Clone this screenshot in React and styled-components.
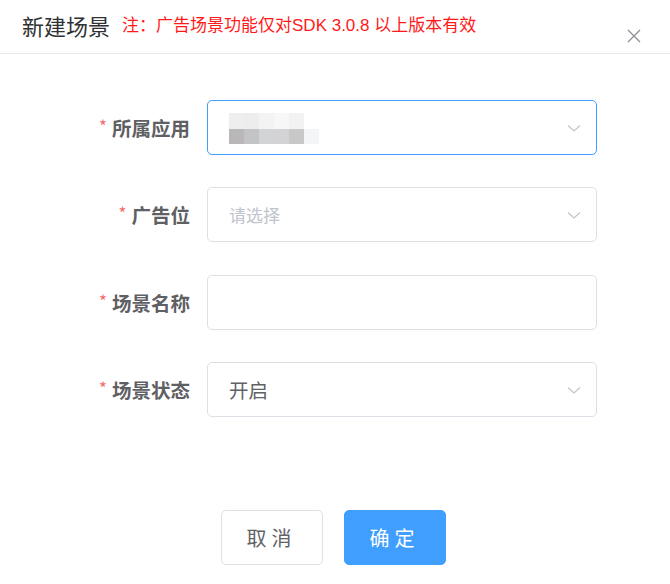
import React from "react";
import styled, { createGlobalStyle } from "styled-components";

const GlobalStyle = createGlobalStyle`
	body {
		margin: 0;
		background: #fff;
		font-family: "Noto Sans CJK SC", "Liberation Sans", sans-serif;
	}
`;

const Dialog = styled.div`
	width: 670px;
	height: 584px;
	background: #fff;
	display: flex;
	flex-direction: column;
`;

const Header = styled.div`
	height: 54px;
	border-bottom: 1px solid #e8e8e8;
	display: flex;
	align-items: center;
	padding: 0 0 0 22px;
	box-sizing: border-box;
	position: relative;
`;

const Title = styled.span`
	font-size: 22px;
	color: #303133;
	line-height: 1;
	margin-top: -3px;
`;

const Note = styled.span`
	font-size: 17px;
	color: #ff1a1a;
	margin-left: 12px;
	line-height: 1;
	margin-top: -3px;
	font-family: "Liberation Sans", "Noto Sans CJK SC", sans-serif;
`;

const Close = styled.button`
	position: absolute;
	right: 28px;
	top: 28px;
	width: 16px;
	height: 16px;
	padding: 0;
	border: none;
	background: none;
	display: flex;
	align-items: center;
	justify-content: center;
`;

const Form = styled.div`
	display: flex;
	flex-direction: column;
	gap: 32.4px;
	padding: 46px 73px 0 0;
`;

const Row = styled.div`
	display: grid;
	grid-template-columns: 190px 1fr;
	column-gap: 17px;
	align-items: center;
`;

const Label = styled.label`
	text-align: right;
	font-size: 19.5px;
	font-weight: 700;
	color: #5f6064;
	&::before {
		content: "*";
		color: #f56c6c;
		font-weight: 400;
		font-size: 17px;
		margin-right: 5px;
		position: relative;
		top: -3px;
	}
`;

const Field = styled.div`
	height: 55px;
	box-sizing: border-box;
	border: 1px solid ${(p) => (p.$focus ? "#409eff" : "#dcdfe6")};
	border-radius: 5px;
	display: flex;
	align-items: center;
	padding: 0 14px 0 21px;
	font-size: 19px;
	color: #606266;
`;

const Value = styled.span`
	flex: 1;
	color: ${(p) => (p.$placeholder ? "#c0c4cc" : "#606266")};
	font-size: ${(p) => (p.$placeholder ? "17px" : "19.5px")};
`;

const Mosaic = styled.div`
	flex: 1;
	display: grid;
	grid-template-columns: repeat(6, 15px);
	grid-auto-rows: 15.5px;
	margin-top: 2px;
`;

const Tile = styled.span`
	background: ${(p) => p.$c};
`;

const Footer = styled.div`
	display: flex;
	justify-content: center;
	gap: 21px;
	margin-top: 93px;
	padding-right: 3px;
`;

const Button = styled.button`
	width: 102px;
	height: 55px;
	border-radius: 5px;
	font-family: inherit;
	font-size: 20px;
	letter-spacing: 5px;
	padding-left: 5px;
	border: 1px solid ${(p) => (p.$primary ? "#409eff" : "#dcdfe6")};
	background: ${(p) => (p.$primary ? "#409eff" : "#fff")};
	color: ${(p) => (p.$primary ? "#fff" : "#606266")};
`;

const Chevron = () => (
	<svg width="16" height="16" viewBox="0 0 16 16">
		<path d="M2 5.5 L8 11 L14 5.5" fill="none" stroke="#c0c4cc" strokeWidth="1.2" />
	</svg>
);

const mosaicColors = [
	"#eeeeee", "#ededed", "#f3f3f3", "#f7f7f7", "#f2f2f2", "#ffffff",
	"#b9b7b8", "#c3c4c6", "#d3d4d6", "#d3d3d5", "#c8c8c9", "#f4f5f7",
];

export default function App() {
	return (
		<Dialog>
			<GlobalStyle />
			<Header>
				<Title>新建场景</Title>
				<Note>注：广告场景功能仅对SDK 3.0.8 以上版本有效</Note>
				<Close>
					<svg width="14" height="14" viewBox="0 0 14 14">
						<path d="M1 1 L13 13 M13 1 L1 13" stroke="#909399" strokeWidth="1.4" />
					</svg>
				</Close>
			</Header>
			<Form>
				<Row>
					<Label>所属应用</Label>
					<Field $focus>
						<Mosaic>
							{mosaicColors.map((c, i) => (
								<Tile key={i} $c={c} />
							))}
						</Mosaic>
						<Chevron />
					</Field>
				</Row>
				<Row>
					<Label>广告位</Label>
					<Field>
						<Value $placeholder>请选择</Value>
						<Chevron />
					</Field>
				</Row>
				<Row>
					<Label>场景名称</Label>
					<Field />
				</Row>
				<Row>
					<Label>场景状态</Label>
					<Field>
						<Value>开启</Value>
						<Chevron />
					</Field>
				</Row>
			</Form>
			<Footer>
				<Button>取消</Button>
				<Button $primary>确定</Button>
			</Footer>
		</Dialog>
	);
}
